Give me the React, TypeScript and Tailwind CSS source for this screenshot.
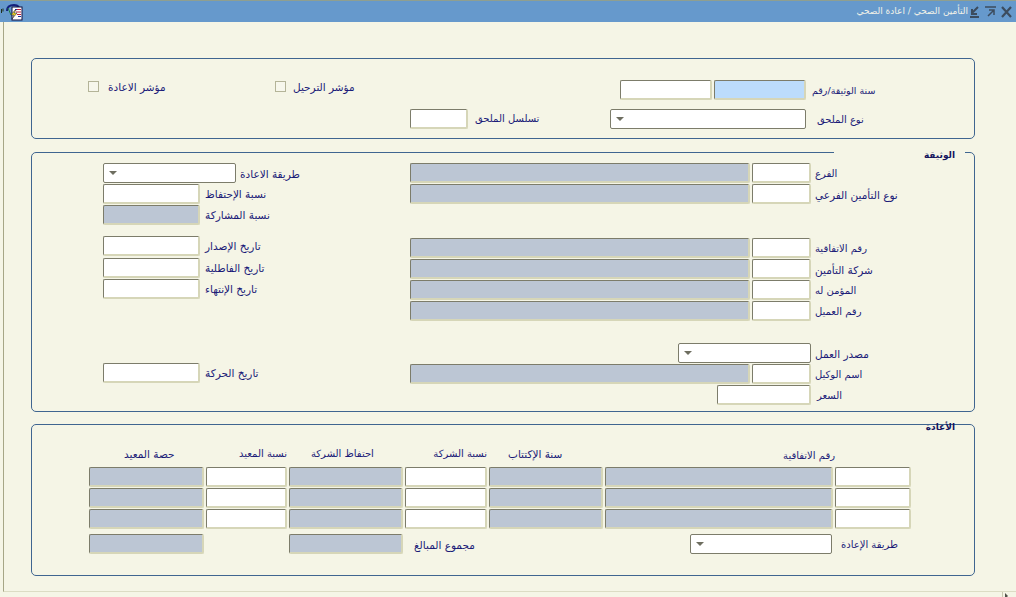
type BoxProps = {
    kind?: 'white' | 'grey' | 'blue',
    className?: string
}

const tones = {
    white: 'bg-white',
    grey: 'bg-[#bcc6d4]',
    blue: 'bg-[#bcdcfc]',
}

function Box({ kind = 'white', className = '' }: BoxProps) {
    return (
        <div className={`h-[20px] shrink-0 rounded-[2px] border-t border-l border-r-2 border-b-2 border-t-[#7c7c6a] border-l-[#7c7c6a] border-r-[#d6d6b8] border-b-[#d6d6b8] ${tones[kind]} ${className}`} />
    )
}

function Combo({ className = '' }: { className?: string }) {
    return (
        <div className={`h-[20px] shrink-0 rounded-[2px] border border-[#7c7c6a] bg-white flex items-center pl-[5px] ${className}`}>
            <div className="w-0 h-0 border-x-[4px] border-x-transparent border-t-[4px] border-t-[#6e6e60]" />
        </div>
    )
}

function Label({ text, size = 'text-[10.5px]', className = '' }: { text: string, size?: string, className?: string }) {
    return (
        <span className={`shrink-0 whitespace-nowrap leading-[14px] text-[#1b1b78] ${size} ${className}`}>{text}</span>
    )
}

function Check({ className = '' }: { className?: string }) {
    return <div className={`w-[11px] h-[11px] shrink-0 border border-[#b4b498] bg-[#f7f7ec] ${className}`} />
}

function Legend({ text, className = '' }: { text: string, className?: string }) {
    return (
        <div className={`absolute top-[-5px] h-[14px] flex justify-end ${className}`}>
            <span className="text-[9px] leading-[14px] font-bold text-[#14145e] whitespace-nowrap">{text}</span>
        </div>
    )
}

function DocRow({ label, size }: { label: string, size?: string }) {
    return (
        <div className="h-[21px] flex items-start">
            <Box kind="grey" className="w-[340px]" />
            <Box className="w-[59px] ml-[2px]" />
            <Label text={label} size={size} className="ml-[4px] pt-[4px]" />
        </div>
    )
}

function SideRow({ label, kind = 'white', className = 'h-[21px]' }: { label: string, kind?: 'white' | 'grey', className?: string }) {
    return (
        <div className={`flex items-start ${className}`}>
            <Box kind={kind} className="w-[97px]" />
            <Label text={label} className="ml-[5px] pt-[3px]" />
        </div>
    )
}

function AppIcon() {
    return (
        <svg width="24" height="20" viewBox="0 0 24 20" className="shrink-0">
            <path d="M1.500 7v4M3 6.500v3" stroke="#20301c" strokeWidth="1" fill="none" />
            <path d="M7 9c0-4 3-6 7-6 2 0 4 1 5 2" stroke="#14207c" strokeWidth="2" fill="none" />
            <rect x="12" y="5" width="10" height="13" fill="#ffffff" stroke="#101040" />
            <path d="M15 7.500h6M16 10h5M17 12.500h4" stroke="#c02038" strokeWidth="1" />
            <path d="M15 7.500h2M18 14.500h3" stroke="#2030a0" strokeWidth="1" />
            <path d="M15 8l-4 5h3l-2 4 5-6h-3l2-3z" fill="#f4d820" stroke="#101040" strokeWidth="0.5" />
            <path d="M8 6l3 7" stroke="#208040" strokeWidth="1" />
        </svg>
    )
}

const small = 'text-[10px]'

export default function App() {
    return (
        <div className="w-[1016px] h-[597px] overflow-hidden bg-[#f5f5e6] flex flex-col font-['DejaVu_Sans',sans-serif]">
            {/* title bar */}
            <div className="h-[22px] shrink-0 border-t border-[#8f9f90] bg-[#6699cc] flex items-center justify-between pr-[3px]">
                <AppIcon />
                <div className="flex items-center">
                    <span dir="rtl" className="text-[9px] pt-px text-[#f2f2e8] whitespace-nowrap">التأمين الصحي / اعادة الصحي</span>
                    <svg width="44" height="14" viewBox="0 0 44 14" className="ml-px" fill="none" stroke="#3c4c5e" strokeWidth="2">
                        <path d="M9 2L3 8M3 4v5h5M1 12h9" />
                        <path d="M16 2h11M19 11l6-6M20 5h5v5" strokeWidth="1.500" />
                        <path d="M33 2l9 10M42 2l-9 10" strokeWidth="2.200" />
                    </svg>
                </div>
            </div>

            {/* form canvas */}
            <div className="h-[570px] shrink-0 ml-[3px] border-l border-b border-l-[#a6a686] border-b-[#dcdcc4] pl-[27px] pt-[36px]">
                {/* header panel */}
                <section className="w-[944px] h-[81px] rounded-[5px] border border-[#3f6590] pt-[21px]">
                    <div className="h-[29px] flex items-start pl-[56px]">
                        <Check className="mt-px" />
                        <Label text="مؤشر الاعادة" className="w-[57px] ml-[9px] text-right" />
                        <Check className="ml-[110px] mt-px" />
                        <Label text="مؤشر الترحيل" className="w-[61px] ml-[7px] text-right" />
                        <Box className="w-[92px] ml-[266px]" />
                        <Box kind="blue" className="w-[92px] ml-[2px]" />
                        <Label text="سنة الوثيقة/رقم" size="text-[9.5px]" className="ml-[6px] pt-[4px]" />
                    </div>
                    <div className="flex items-start pl-[378px]">
                        <Box className="w-[58px]" />
                        <Label text="تسلسل الملحق" size={small} className="w-[62px] ml-[7px] pt-[3px]" />
                        <Combo className="w-[196px] ml-[73px]" />
                        <Label text="نوع الملحق" size={small} className="ml-[11px] pt-[4px]" />
                    </div>
                </section>

                {/* policy panel */}
                <section className="relative w-[944px] h-[260px] mt-[13px] rounded-[5px] border border-[#3f6590] pt-[10px] pl-[71px] flex">
                    <Legend text="الوثيقة" className="right-[9px] w-[131px] h-[11px] bg-[#f5f5e6] pr-[10px]" />
                    <div className="w-[307px] shrink-0">
                        <div className="h-[21px] flex items-start">
                            <Combo className="w-[133px]" />
                            <Label text="طريقة الاعادة" className="ml-[4px] pt-[4px]" />
                        </div>
                        <SideRow label="نسبة الإحتفاظ" />
                        <SideRow label="نسبة المشاركة" kind="grey" />
                        <div className="h-[10px]" />
                        <SideRow label="تاريخ الإصدار" className="h-[22px]" />
                        <SideRow label="تاريخ الفاطلية" />
                        <SideRow label="تاريخ الإنتهاء" />
                        <div className="h-[63px]" />
                        <SideRow label="تاريخ الحركة" />
                    </div>
                    <div className="flex-1">
                        <DocRow label="الفرع" size={small} />
                        <DocRow label="نوع التأمين الفرعي" />
                        <div className="h-[33px]" />
                        <DocRow label="رقم الاتفاقية" size={small} />
                        <DocRow label="شركة التأمين" />
                        <DocRow label="المؤمن له" size={small} />
                        <DocRow label="رقم العميل" size={small} />
                        <div className="h-[21px]" />
                        <div className="h-[21px] flex items-start pl-[268px]">
                            <Combo className="w-[133px]" />
                            <Label text="مصدر العمل" className="ml-[4px] pt-[4px]" />
                        </div>
                        <DocRow label="اسم الوكيل" size={small} />
                        <div className="h-[21px] flex items-start pl-[307px]">
                            <Box className="w-[94px]" />
                            <Label text="السعر" size={small} className="ml-[6px] pt-[4px]" />
                        </div>
                    </div>
                </section>

                {/* reinsurance panel */}
                <section className="relative w-[944px] h-[152px] mt-[12px] rounded-[5px] border border-[#3f6590] pt-[21px] pl-[57px]">
                    <Legend text="الأعادة" className="right-[19px]" />
                    <div className="grid grid-cols-[115px_81px_114px_82px_114px_228px_76px] gap-x-[2px] gap-y-px">
                        <Label text="حصة المعيد" className="h-[20px] pl-[35px] pt-px" />
                        <Label text="نسبة المعيد" size={small} className="h-[20px] pt-px text-right" />
                        <Label text="احتفاظ الشركة" size={small} className="h-[20px] pl-[22px] pt-px" />
                        <Label text="نسبة الشركة" size={small} className="h-[20px] pt-px text-right" />
                        <Label text="سنة الإكتتاب" className="h-[20px] pl-[19px] pt-px" />
                        <Label text="رقم الاتفاقية" size={small} className="h-[20px] mr-[-2px] pt-[3px] text-right" />
                        <div />
                        {[0, 1, 2].flatMap((row) => [
                            <Box key={`${row}-a`} kind="grey" />,
                            <Box key={`${row}-b`} />,
                            <Box key={`${row}-c`} kind="grey" />,
                            <Box key={`${row}-d`} />,
                            <Box key={`${row}-e`} kind="grey" />,
                            <Box key={`${row}-f`} kind="grey" />,
                            <Box key={`${row}-g`} />,
                        ])}
                    </div>
                    <div className="mt-[5px] grid grid-cols-[115px_81px_114px_82px_114px_228px_76px] gap-x-[2px] items-start">
                        <Box kind="grey" />
                        <div />
                        <Box kind="grey" />
                        <Label text="مجموع المبالغ" className="pl-[9px] pt-[4px]" />
                        <div />
                        <div className="flex justify-end pr-px">
                            <Combo className="w-[142px]" />
                        </div>
                        <Label text="طريقة الإعادة" size={small} className="ml-[6px] pt-[4px]" />
                    </div>
                </section>
            </div>

            {/* bottom strip */}
            <div className="flex-1 flex justify-end pr-[6px]">
                <div className="w-[8px] border-l border-[#c8c8b0] flex items-start pl-[2px] pt-px">
                    <div className="w-0 h-0 border-y-[3px] border-y-transparent border-l-[3px] border-l-[#505048]" />
                </div>
            </div>
        </div>
    )
}
